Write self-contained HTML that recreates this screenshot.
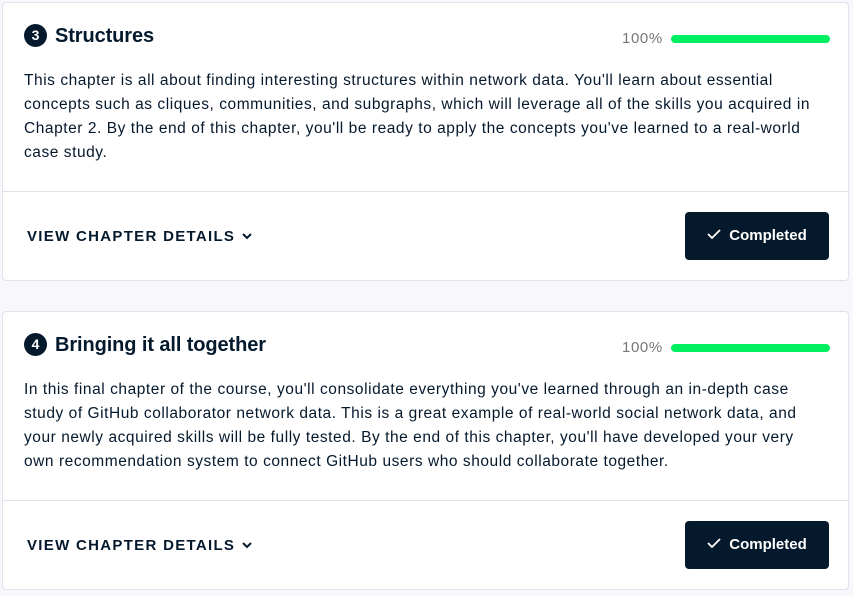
<!DOCTYPE html>
<html><head><style>
body{margin:0;background:#f7f7fc;font-family:"Liberation Sans",sans-serif;color:#05192d;width:853px;height:596px;overflow:hidden;position:relative}
.card{position:absolute;left:2px;width:847px;height:279px;background:#fff;border:1px solid #e1e1e8;border-radius:4px;box-sizing:border-box}
.num{position:absolute;left:21px;top:21px;width:23px;height:23px;border-radius:50%;background:#05192d;color:#fff;font-weight:bold;font-size:14px;text-align:center;line-height:23px}
.title{position:absolute;left:52px;top:22px;font-size:20px;font-weight:bold;letter-spacing:-0.1px}
.pct{position:absolute;left:619px;top:27px;font-size:15px;color:#777;letter-spacing:0.6px}
.bar{position:absolute;left:668px;top:32px;width:159px;height:8px;border-radius:4px;background:#03ef62}
.desc{position:absolute;left:21px;top:66px;font-size:15.5px;line-height:24px;letter-spacing:0.55px;white-space:nowrap}
.div{position:absolute;left:0;right:0;top:188px;border-top:1px solid #e1e1e8}
.vcd{position:absolute;left:24px;top:225px;font-size:15px;font-weight:bold;letter-spacing:1.3px}
.btn{position:absolute;left:682px;top:209px;width:144px;height:48px;background:#05192d;border-radius:4px;color:#fff;font-weight:bold;font-size:15px;line-height:48px;text-align:center}
</style></head><body>
<div class="card" style="top:2px">
<div class="num">3</div><div class="title">Structures</div>
<div class="pct">100%</div><div class="bar"></div>
<div class="desc">This chapter is all about finding interesting structures within network data. You'll learn about essential<br>concepts such as cliques, communities, and subgraphs, which will leverage all of the skills you acquired in<br>Chapter 2. By the end of this chapter, you'll be ready to apply the concepts you've learned to a real-world<br>case study.</div>
<div class="div"></div>
<div class="vcd">VIEW CHAPTER DETAILS <svg width="12" height="10" viewBox="0 0 12 10"><path d="M2 3l4 4 4-4" stroke="#05192d" stroke-width="2" fill="none"/></svg></div>
<div class="btn"><svg width="14" height="12" viewBox="0 0 14 12" style="margin-right:8px"><path d="M1 6l4 4 8-8" stroke="#fff" stroke-width="1.8" fill="none"/></svg>Completed</div>
</div>
<div class="card" style="top:311px">
<div class="num">4</div><div class="title">Bringing it all together</div>
<div class="pct">100%</div><div class="bar"></div>
<div class="desc">In this final chapter of the course, you'll consolidate everything you've learned through an in-depth case<br>study of GitHub collaborator network data. This is a great example of real-world social network data, and<br>your newly acquired skills will be fully tested. By the end of this chapter, you'll have developed your very<br>own recommendation system to connect GitHub users who should collaborate together.</div>
<div class="div"></div>
<div class="vcd">VIEW CHAPTER DETAILS <svg width="12" height="10" viewBox="0 0 12 10"><path d="M2 3l4 4 4-4" stroke="#05192d" stroke-width="2" fill="none"/></svg></div>
<div class="btn"><svg width="14" height="12" viewBox="0 0 14 12" style="margin-right:8px"><path d="M1 6l4 4 8-8" stroke="#fff" stroke-width="1.8" fill="none"/></svg>Completed</div>
</div>
</body></html>
